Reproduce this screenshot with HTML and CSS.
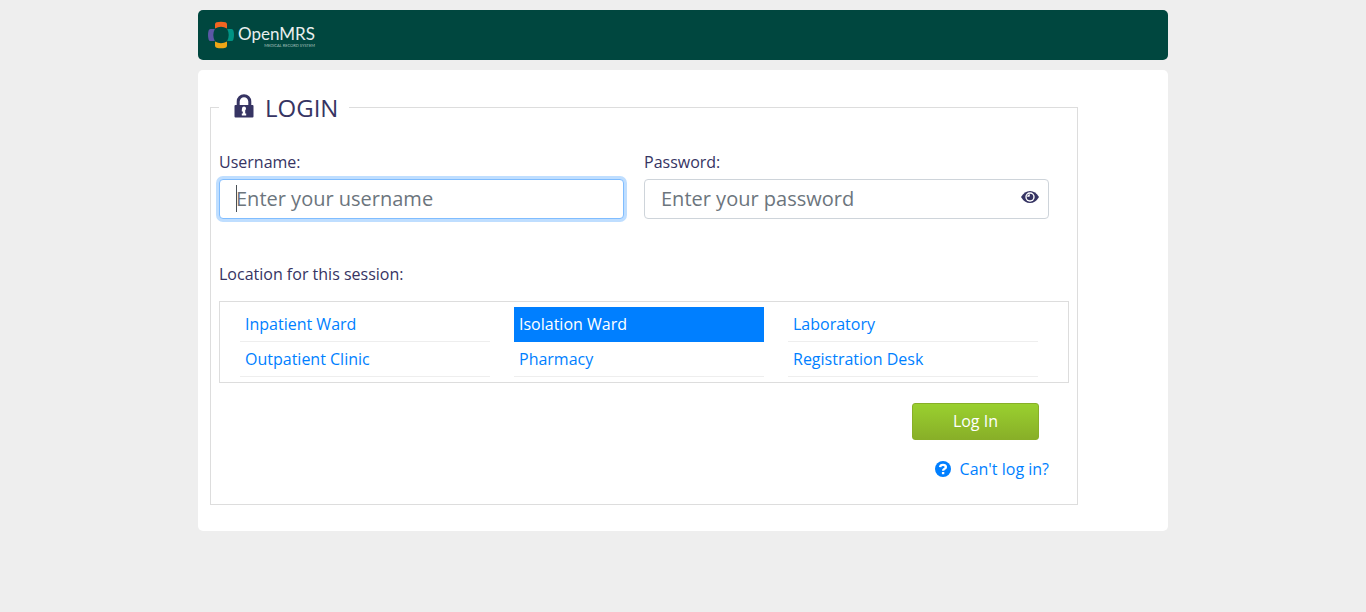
FILE: index.html
```html
<!DOCTYPE html>
<html lang="en">
<head>
<meta charset="utf-8">
<meta name="viewport" content="width=device-width, initial-scale=1">
<title>Login</title>
<link rel="stylesheet" href="styles.css">
</head>
<body>
<div class="page">
  <header class="header">
    <a class="logo" href="#" aria-label="OpenMRS home">
      <svg class="logo-mark" viewBox="0 0 26 28" aria-hidden="true">
        <path fill="#f26522" d="M7 7.500V3.500Q7 1.800 8.500 1.300Q13 .2 17.500 1.300Q19 1.800 19 3.500V7.500Q13 4.200 7 7.500Z"/>
        <path fill="#eea616" d="M7 20.500V24.500Q7 26.200 8.500 26.700Q13 27.800 17.500 26.700Q19 26.200 19 24.500V20.500Q13 23.800 7 20.500Z"/>
        <path fill="#5b57a6" d="M6.800 8H2.500Q1 8 .6 9.500Q-.6 14 .6 18.500Q1 20 2.500 20H6.800Q3.800 14 6.800 8Z"/>
        <path fill="#009384" d="M19.200 8H23.500Q25 8 25.400 9.500Q26.600 14 25.400 18.500Q25 20 23.500 20H19.200Q22.200 14 19.200 8Z"/>
      </svg>
      <span class="logo-words">
        <span class="logo-name">OpenMRS</span>
        <span class="logo-tag">MEDICAL RECORD SYSTEM</span>
      </span>
    </a>
  </header>

  <main class="card">
    <form>
      <fieldset class="login">
        <legend class="title">
          <svg class="lock" viewBox="0 0 20 24" aria-hidden="true">
            <path d="M4.200 12V7.500a5.800 5.800 0 0 1 11.600 0V12" fill="none" stroke="currentColor" stroke-width="3"/>
            <rect y="11" x=".5" width="19" height="12.500" rx="1" fill="currentColor"/>
            <path d="M8 14.500a2 2 0 0 1 4 0q0 1-.8 1.700V19.500H12.200V21.500H7.800V19.500H8.800V17.500H7.800V16z" fill="#fff"/>
          </svg>
          Login
        </legend>

        <div class="fields">
          <div class="field">
            <label for="username">Username:</label>
            <input class="control active" id="username" type="text" placeholder="Enter your username" autofocus>
          </div>
          <div class="field">
            <label for="password">Password:</label>
            <div class="password">
              <input class="control" id="password" type="password" placeholder="Enter your password">
              <button class="reveal" type="button" aria-label="Show password">
                <svg viewBox="0 0 18 12" aria-hidden="true">
                  <path fill="currentColor" d="M0 6Q3.500 0 9 0T18 6Q14.500 12 9 12T0 6Z"/>
                  <circle cx="9" cy="6" r="4.700" fill="#fff"/>
                  <circle cx="9" cy="6" r="3.300" fill="currentColor"/>
                  <path d="M6 5.800Q6.200 3.400 8.800 3V5.200Q8.400 5.500 8.200 5.800Z" fill="#fff"/>
                </svg>
              </button>
            </div>
          </div>
        </div>

        <p class="location-label" id="location-label">Location for this session:</p>
        <ul class="locations" aria-labelledby="location-label">
          <li><a class="location" href="#">Inpatient Ward</a></li>
          <li><a class="location selected" href="#" aria-current="true">Isolation Ward</a></li>
          <li><a class="location" href="#">Laboratory</a></li>
          <li><a class="location" href="#">Outpatient Clinic</a></li>
          <li><a class="location" href="#">Pharmacy</a></li>
          <li><a class="location" href="#">Registration Desk</a></li>
        </ul>

        <div class="actions">
          <button class="submit" type="submit">Log In</button>
        </div>
        <div class="help">
          <a class="help-link" href="#">
            <svg viewBox="0 0 16 16" aria-hidden="true">
              <circle cx="8" cy="8" r="8" fill="currentColor"/>
              <path d="M5.100 6.200Q5.300 3.900 8 3.900T10.900 6.100Q10.900 7.300 9.300 8Q8.100 8.600 8.100 9.800" fill="none" stroke="#fff" stroke-width="2.400"/>
              <rect x="6.900" y="11" width="2.400" height="2.200" fill="#fff"/>
            </svg>
            Can't log in?
          </a>
        </div>
      </fieldset>
    </form>
  </main>
</div>
</body>
</html>
```

FILE: styles.css
```css
*,
*::before,
*::after {
  box-sizing: border-box;
}

body {
  margin: 0;
  background: #eeeeee;
  color: #363463;
  font: 16px/24px "Open Sans", "Noto Sans", sans-serif;
}

.page {
  display: flex;
  flex-direction: column;
  gap: 10px;
  max-width: 970px;
  margin: 0 auto;
  padding: 10px 0;
}

.header {
  display: flex;
  align-items: center;
  min-height: 50px;
  padding: 0 10px;
  border-radius: 5px;
  background: #00473f;
}

.logo {
  display: flex;
  align-items: center;
  gap: 4px;
  color: #e8efee;
  text-decoration: none;
}

.logo-mark {
  width: 26px;
  height: 28px;
}

.logo-words {
  display: flex;
  flex-direction: column;
  gap: 1px;
  padding-top: 3px;
  font-family: Lato, sans-serif;
}

.logo-name {
  font-size: 17px;
  line-height: 18px;
}

.logo-tag {
  align-self: flex-end;
  color: #a9c2be;
  font-size: 4px;
  line-height: 4px;
}

.card {
  padding: 20px 90px 26px 12px;
  border-radius: 5px;
  background: #ffffff;
}

.login {
  min-width: 0;
  margin: 0;
  padding: 25px 8px 23px;
  border: 1px solid #dddddd;
}

.title {
  display: flex;
  align-items: center;
  gap: 11px;
  padding: 0 11px 0 15px;
  font-size: 24px;
  line-height: 35px;
  text-transform: uppercase;
}

.lock {
  width: 20px;
  height: 24px;
  margin-bottom: 4px;
}

.fields {
  display: grid;
  grid-template-columns: 1fr 1fr;
  gap: 20px;
  padding-right: 20px;
}

.field {
  display: flex;
  flex-direction: column;
  gap: 5px;
}

.control {
  width: 100%;
  height: 40px;
  padding: 0 16px 2px;
  border: 1px solid #ced4da;
  border-radius: 4px;
  outline: 0;
  background: #ffffff;
  color: #495057;
  font: inherit;
  font-size: 20px;
}

.control::placeholder {
  color: #6c757d;
  opacity: 1;
}

.control.active {
  border-color: #80bdff;
  box-shadow: 0 0 0 3px #bfdeff;
  caret-color: transparent;
}

.control.active:placeholder-shown {
  background: linear-gradient(#495057, #495057) 16px 5px / 1px 27px no-repeat #ffffff;
}

.password {
  display: grid;
}

.password > * {
  grid-area: 1 / 1;
}

.reveal {
  display: flex;
  align-self: center;
  justify-self: end;
  margin: 0 10px 4px 0;
  padding: 0;
  border: 0;
  background: none;
  color: #363463;
  cursor: pointer;
}

.reveal svg {
  width: 18px;
  height: 12px;
}

.location-label {
  margin: 43px 0 15px;
}

.locations {
  display: grid;
  grid-template-columns: repeat(3, 1fr);
  column-gap: 24px;
  margin: 0;
  padding: 5px 30px 5px 20px;
  border: 1px solid #dddddd;
  list-style: none;
}

.location {
  display: block;
  padding: 5px;
  border-bottom: 1px solid #eeeeee;
  color: #007fff;
  text-decoration: none;
}

.location.selected {
  border-color: #007fff;
  background: #007fff;
  color: #ffffff;
}

.actions {
  display: flex;
  justify-content: flex-end;
  padding: 20px 30px 17px 0;
}

.submit {
  height: 37px;
  padding: 0 40px 2px;
  border: 1px solid #88af28;
  border-radius: 3px;
  background: linear-gradient(#9ad02f, #88af28);
  color: #ffffff;
  font: inherit;
  cursor: pointer;
}

.help {
  display: flex;
  justify-content: flex-end;
  padding-right: 20px;
}

.help-link {
  display: flex;
  align-items: center;
  gap: 9px;
  color: #007fff;
  text-decoration: none;
}

.help-link svg {
  width: 16px;
  height: 16px;
}
```
